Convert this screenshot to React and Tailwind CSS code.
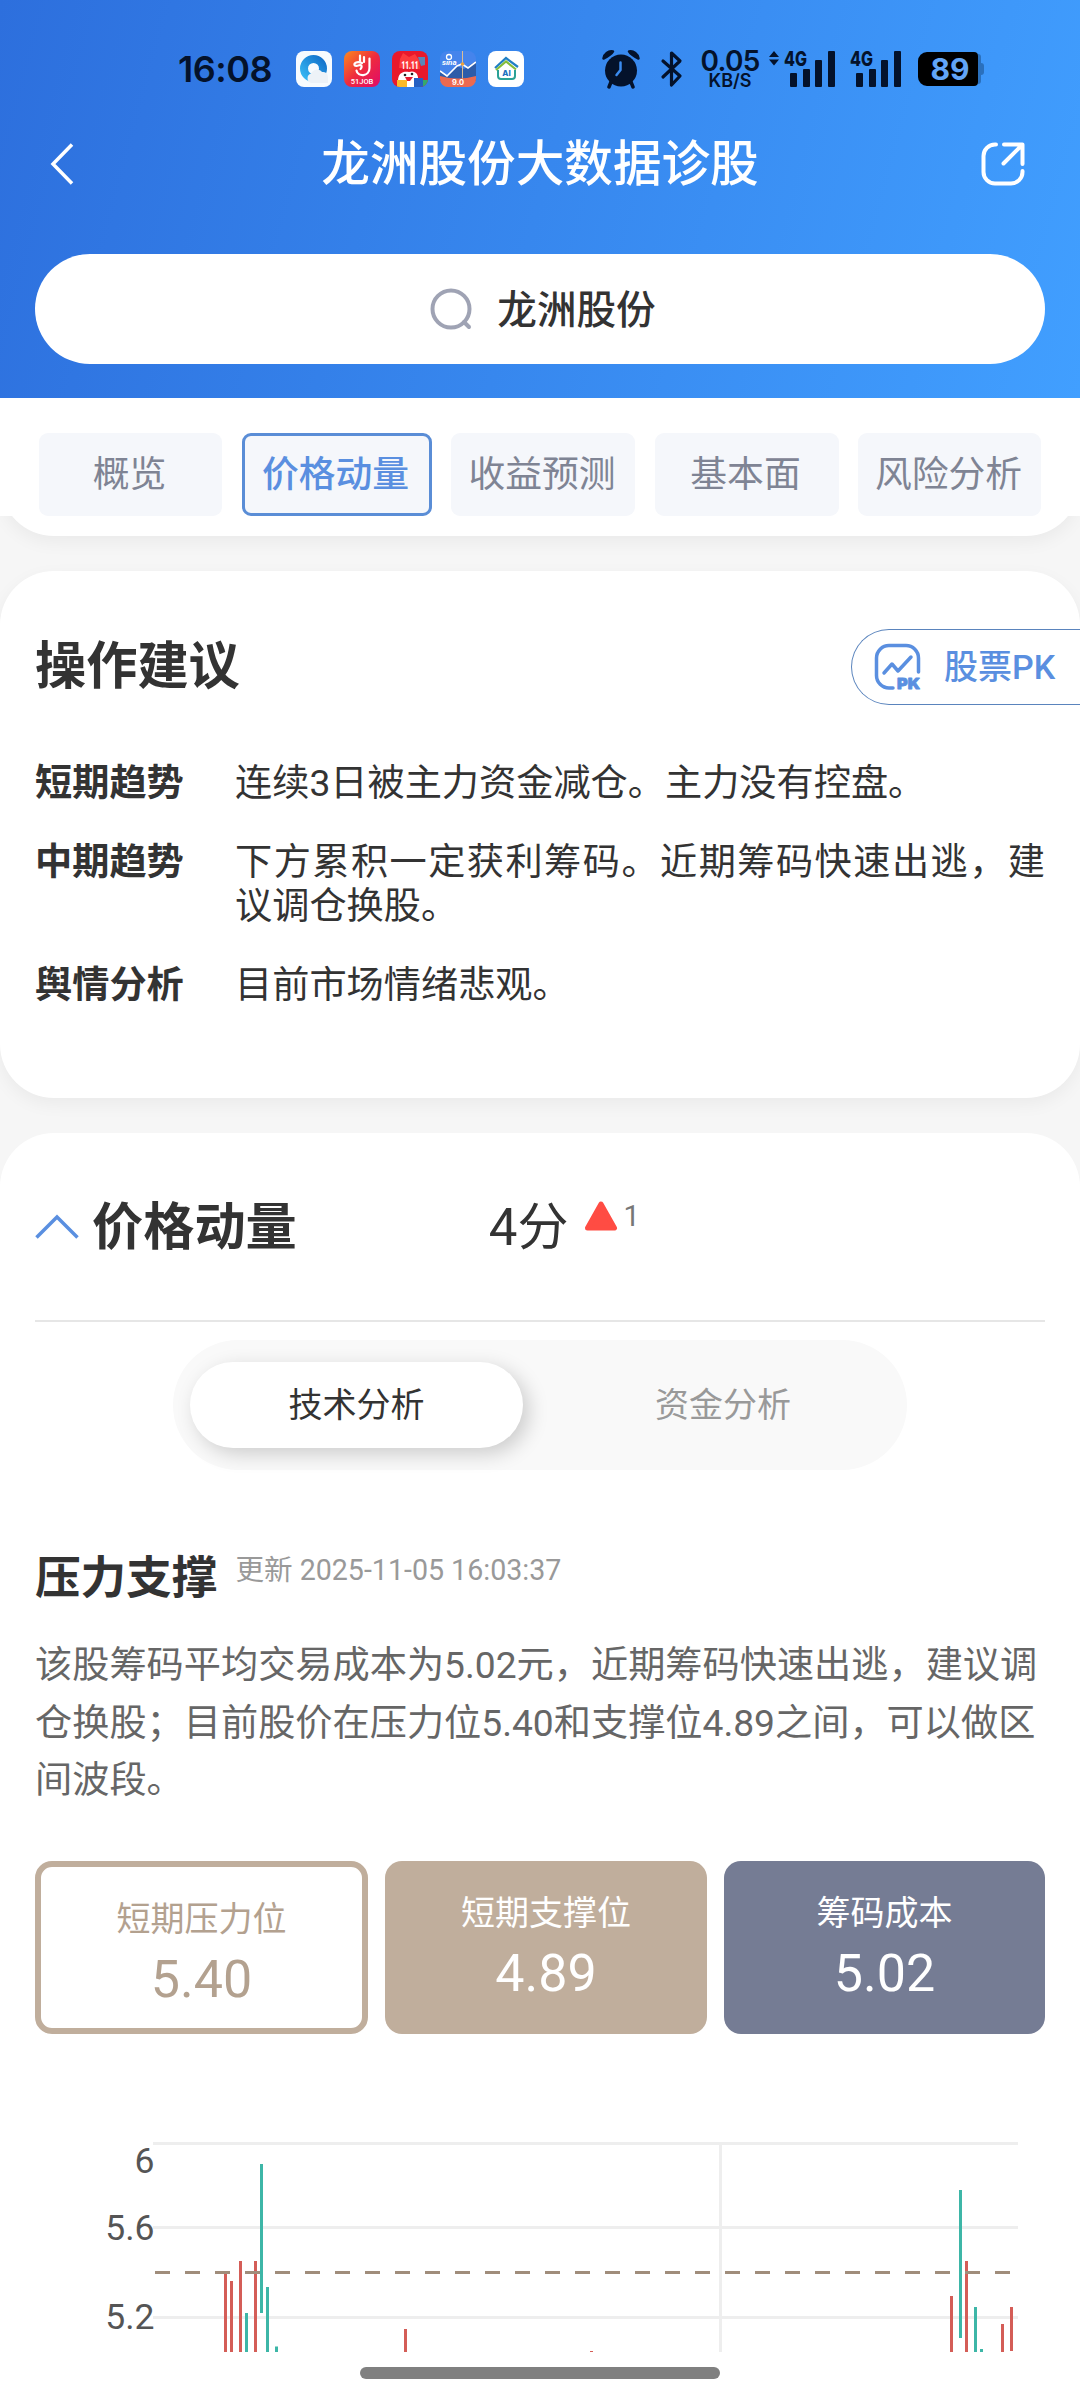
// src/App.jsx
import React, { useState } from "react";

const tabs = [
  { name: "概览", width: "w-[183px]" },
  { name: "价格动量", width: "w-[190px]" },
  { name: "收益预测", width: "w-[184px]" },
  { name: "基本面", width: "w-[184px]" },
  { name: "风险分析", width: "w-[183px]" },
];

const advice = [
  { label: "短期趋势", text: "连续3日被主力资金减仓。主力没有控盘。" },
  { label: "中期趋势", text: "下方累积一定获利筹码。近期筹码快速出逃，建议调仓换股。" },
  { label: "舆情分析", text: "目前市场情绪悲观。" },
];

// x, top, bottom, direction (all in chart units)
const bars = [
  [224, 239, 318, "up"],
  [230, 247, 318, "up"],
  [239, 227, 318, "up"],
  [245, 279, 318, "down"],
  [254, 227, 318, "up"],
  [260, 130, 279, "down"],
  [266, 253, 318, "down"],
  [275, 312.5, 318, "down"],
  [404, 295, 318, "up"],
  [590, 317, 318, "up"],
  [950, 262, 318, "up"],
  [959, 156, 304, "down"],
  [965, 227, 318, "up"],
  [974, 273, 318, "down"],
  [980, 315, 318, "down"],
  [1001, 290, 318, "up"],
  [1010, 273, 317, "up"],
];

function BrowserIcon() {
  return (
    <svg width="36" height="36" viewBox="0 0 36 36">
      <defs>
        <linearGradient id="ring" x1="0" y1="1" x2="1" y2="0">
          <stop offset="0" stopColor="#35b6f2" />
          <stop offset="1" stopColor="#1272cc" />
        </linearGradient>
      </defs>
      <rect width="36" height="36" rx="8" fill="#f7fbfe" />
      <circle cx="17.500" cy="17.500" r="9.500" fill="none" stroke="url(#ring)" strokeWidth="8" />
      <path d="M15 32a5 5 0 0 1 0-9.500 6.500 6.500 0 0 1 11-1.500 5 5 0 0 1 6 5v6z" fill="#edf2f7" />
    </svg>
  );
}

function JobIcon() {
  return (
    <svg width="36" height="36" viewBox="0 0 36 36">
      <defs>
        <linearGradient id="job" x1="0" y1="0" x2="1" y2="1">
          <stop offset="0" stopColor="#fb8a1e" />
          <stop offset="0.5" stopColor="#ee2b3e" />
          <stop offset="1" stopColor="#e00a6a" />
        </linearGradient>
      </defs>
      <rect width="36" height="36" rx="8" fill="url(#job)" />
      <g fill="none" stroke="#fff" strokeWidth="2.200" strokeLinecap="round" strokeLinejoin="round">
        <path d="M16 10V4.500M20 11V6M25.500 7.500V17c0 9-12 9-13 2.500" />
        <path d="M18 12c-5-2-8 0-7.500 2s5 0 6 0 2 2 0 4" />
      </g>
      <text x="18" y="33" fontSize="7.500" fill="#fff" textAnchor="middle" fontFamily="Roboto" fontWeight="500">51JOB</text>
    </svg>
  );
}

function SaleIcon() {
  return (
    <svg width="36" height="36" viewBox="0 0 36 36">
      <defs>
        <clipPath id="sale"><rect width="36" height="36" rx="8" /></clipPath>
      </defs>
      <g clipPath="url(#sale)">
        <rect width="36" height="36" fill="#e8192c" />
        <path d="M7 17 8 8l3-6 6 4 6-3 4 6 1 9z" fill="#fb3a3c" />
        <path d="M26 6h7v8l-4 1z" fill="#5a87b8" />
        <text x="18" y="18" fontSize="11" textLength="17" lengthAdjust="spacingAndGlyphs" fill="#fff" textAnchor="middle" fontFamily="Roboto" fontWeight="900">11.11</text>
        <path d="M6 30c0-8 5-10 11-9 6-2 10 2 9 9l-2 6H8z" fill="#fff" />
        <circle cx="13" cy="24" r="1.300" fill="#222" />
        <circle cx="20" cy="23" r="1.300" fill="#222" />
        <path d="M13 26h8l-3 4h-3z" fill="#e21b2f" />
        <rect x="5" y="29" width="10" height="7" fill="#fbb928" />
        <rect x="22" y="27" width="9" height="9" fill="#2460c2" />
        <rect x="31" y="29" width="5" height="7" fill="#35a96a" />
      </g>
    </svg>
  );
}

function SinaIcon() {
  return (
    <svg width="36" height="36" viewBox="0 0 36 36">
      <defs>
        <clipPath id="sina"><rect width="36" height="36" rx="8" /></clipPath>
      </defs>
      <g clipPath="url(#sina)">
        <rect width="36" height="36" fill="#4584ec" />
        <path d="M0 20l7 6 10-11 7 3 12-8v20H0z" fill="#2d5ca9" />
        <path d="M22.500 0v28" stroke="#d9bd96" strokeWidth="1" />
        <path d="M0 20l7 5 10-10 5-2 6 4 8-6" fill="none" stroke="#fff" strokeWidth="1.600" />
        <circle cx="22.500" cy="13" r="1.800" fill="#eaa13c" />
        <path d="M0 25q18 5 36 0v11H0z" fill="#ec6a50" />
        <circle cx="9" cy="6" r="2.500" fill="none" stroke="#fff" strokeWidth="1.300" />
        <text x="2" y="14" fontSize="8" fill="#fff" fontStyle="italic" fontFamily="Roboto" fontWeight="700">sina</text>
        <text x="18" y="34" fontSize="7.500" fill="#fff" textAnchor="middle" fontFamily="Inter" fontWeight="700">9.0</text>
      </g>
    </svg>
  );
}

function HomeAiIcon() {
  return (
    <svg width="36" height="36" viewBox="0 0 36 36">
      <rect width="36" height="36" rx="8" fill="#fff" />
      <path d="M7 17 18 7l12 9" fill="none" stroke="#1f7fc4" strokeWidth="2.200" />
      <path d="M8 19 18 10.500l10 8" fill="none" stroke="#84bd3b" strokeWidth="2.200" />
      <path d="M10 19v6q0 3 3 3h11q3 0 3-3v-6" fill="none" stroke="#2aa196" strokeWidth="2" />
      <text x="18.500" y="25" fontSize="8" fill="#1b70c0" textAnchor="middle" fontFamily="Inter" fontWeight="800">AI</text>
    </svg>
  );
}

function AlarmIcon() {
  return (
    <svg width="38" height="40" viewBox="0 0 38 40" className="ml-[78px]">
      <g fill="#04122b">
        <circle cx="19" cy="21.500" r="16" />
        <path d="M1.500 9.500A8 8 0 0 1 11 2.500Q9 6 1.500 9.500zM36.500 9.500A8 8 0 0 0 27 2.500q2 3.500 9.500 7z" stroke="#04122b" strokeWidth="2.500" strokeLinejoin="round" />
        <path d="M9 33l-2 5M29 33l2 5" stroke="#04122b" strokeWidth="3.500" strokeLinecap="round" />
      </g>
      <path d="M18.500 13.500v7.500l-4 5" fill="none" stroke="#3a8bf0" strokeWidth="2.500" strokeLinecap="round" strokeLinejoin="round" />
    </svg>
  );
}

function SignalIcon({ arrows, className }) {
  return (
    <svg width="68" height="54" viewBox="0 -8 68 54" className={className}>
      <g fill="#04122b">
        {arrows && <path d="M1 7 6 1l5 6zM1 9.500h10L6 15.500z" />}
        <text x="16" y="16" fontSize="20" textLength="23" lengthAdjust="spacingAndGlyphs" fontFamily="Inter" fontWeight="800">4G</text>
        <rect x="22" y="23" width="7" height="14" rx="1" />
        <rect x="35" y="19" width="7" height="18" rx="1" />
        <rect x="47" y="10" width="7" height="27" rx="1" />
        <rect x="60" y="1" width="7" height="36" rx="1" />
      </g>
    </svg>
  );
}

function StatusBar() {
  return (
    <div className="flex h-[110px] items-center pt-[28px] pl-[178px] text-[#04122b]">
      <span className="w-[118px] font-[Inter] text-[36px] leading-none font-semibold tracking-[-0.5px]">16:08</span>
      <div className="flex gap-[12px]">
        <BrowserIcon />
        <JobIcon />
        <SaleIcon />
        <SinaIcon />
        <HomeAiIcon />
      </div>
      <AlarmIcon />
      <svg width="24" height="38" viewBox="0 0 24 38" className="ml-[20px]">
        <path d="M3 11l17 15-8.500 9V3L20 11 3 27" fill="none" stroke="#04122b" strokeWidth="3.200" strokeLinecap="round" strokeLinejoin="round" />
      </svg>
      <div className="ml-[14px] w-[64px] text-center font-[Inter] font-semibold">
        <div className="text-[28px] leading-[23px] tracking-tight">0.05</div>
        <div className="text-[18px] leading-[15px]">KB/S</div>
      </div>
      <SignalIcon arrows className="ml-[6px]" />
      <SignalIcon className="-ml-[2px]" />
      <div className="ml-[16px] flex items-center">
        <div className="flex h-[34px] w-[60px] items-center justify-center rounded-[9px] rounded-r-[4px] bg-black pl-[4px] font-[Inter] text-[30px] leading-none font-bold text-[#62a5f8]">89</div>
        <div className="h-[30px] w-[3px] rounded-r-[3px] bg-[#2a70bd]" />
        <div className="h-[12px] w-[3px] rounded-r-[3px] bg-[#2a70bd]" />
      </div>
    </div>
  );
}

function Header() {
  return (
    <header className="h-[398px] bg-linear-[105deg,#2d6fdd,#419fff]">
      <StatusBar />
      <div className="flex h-[107px] items-center justify-between pr-[55px] pl-[50px]">
        <svg width="24" height="42" viewBox="0 0 24 42" fill="none" stroke="#fff" strokeWidth="3.500">
          <path d="M22 1.500 3 21l19 19.500" />
        </svg>
        <h1 className="pt-[3px] pl-[25px] text-[48.600px] font-medium text-white">龙洲股份大数据诊股</h1>
        <svg width="44" height="44" viewBox="0 0 44 44" fill="none" stroke="#fff" strokeWidth="4" strokeLinecap="round" strokeLinejoin="round">
          <path d="M15 2.500h-1A11.500 11.500 0 0 0 2.500 14v16A11.500 11.500 0 0 0 14 41.500h16A11.500 11.500 0 0 0 41.500 30v-1" />
          <path d="M23 2.500h18.500V22M40 4 22.500 21.500" />
        </svg>
      </div>
      <div className="mx-[35px] mt-[37px] flex h-[110px] items-center justify-center rounded-full bg-white pl-[5px]">
        <svg width="44" height="44" viewBox="0 0 44 44" fill="none" stroke="#9fa3b4" strokeWidth="4" strokeLinecap="round">
          <circle cx="22" cy="22" r="18.500" />
          <path d="M35 35l5 5" />
        </svg>
        <span className="ml-[24px] pt-[3px] text-[39.600px] font-medium text-[#333]">龙洲股份</span>
      </div>
    </header>
  );
}

function PkIcon() {
  return (
    <svg width="48" height="52" viewBox="0 -2 48 52" fill="none" stroke="#5a8fe0" strokeWidth="3.500" strokeLinecap="round" strokeLinejoin="round">
      <path d="M19 45h-4A12.500 12.500 0 0 1 2.500 32.500V15A12.500 12.500 0 0 1 15 2.500h17A12.500 12.500 0 0 1 44.500 15v14" />
      <path d="M10 30l8-9 6 7 13-14" />
      <text x="23" y="46" fontSize="15" fill="#5a8fe0" strokeWidth="0.800" textLength="23" lengthAdjust="spacingAndGlyphs" fontFamily="Inter" fontWeight="900">PK</text>
    </svg>
  );
}

function Chart() {
  return (
    <svg width="1080" height="318" viewBox="0 0 1080 318" className="block">
      <g fill="#eee">
        <rect x="153" y="108" width="865" height="3" />
        <rect x="153" y="192" width="865" height="3" />
        <rect x="153" y="282" width="865" height="3" />
        <rect x="719" y="108" width="3" height="210" />
      </g>
      <g fill="#555" fontSize="35.500" textAnchor="end" fontFamily="Roboto">
        <text x="154.500" y="139">6</text>
        <text x="154.500" y="206">5.6</text>
        <text x="154.500" y="294.500">5.2</text>
      </g>
      {bars.map(([x, top, bottom, dir]) => (
        <rect key={x} x={x} y={top} width="3" height={bottom - top} fill={dir === "up" ? "#d45d57" : "#3db6a7"} />
      ))}
      <path d="M155 238.500H1011" stroke="#a08d7b" strokeWidth="3" strokeDasharray="15 15" />
    </svg>
  );
}

export default function App() {
  const [active, setActive] = useState("价格动量");
  const [mode, setMode] = useState("技术分析");

  return (
    <div lang="zh-CN" className="flex h-[2400px] w-[1080px] flex-col overflow-hidden bg-[#f6f6f6] font-[Roboto,'Noto_Sans_CJK_SC',sans-serif] text-[#333]">
      <Header />

      <nav className="flex h-[118px] shrink-0 justify-between bg-white px-[39px] pt-[35px]">
        {tabs.map((tab) => (
          <button
            key={tab.name}
            onClick={() => setActive(tab.name)}
            className={`${tab.width} h-[83px] rounded-[9px] bg-[#f5f7fb] pr-[2px] text-[36.800px] whitespace-nowrap ${
              active === tab.name ? "border-[3px] border-[#5a8dd6] font-medium text-[#5a8fe0]" : "text-[#7f8494]"
            }`}
          >
            {tab.name}
          </button>
        ))}
      </nav>

      {/* bottom edge of the card that scrolls under the tabs */}
      <div className="h-[55px] shrink-0 overflow-hidden">
        <div className="-mt-[100px] h-[120px] rounded-b-[54px] bg-white shadow-[0_6px_18px_rgba(0,0,0,0.05)]" />
      </div>

      <section className="h-[527px] shrink-0 rounded-[54px] bg-white pt-[58px] shadow-[0_6px_18px_rgba(0,0,0,0.05)]">
        <div className="flex h-[76px] items-center justify-between pl-[35px]">
          <h2 className="text-[51.200px] leading-none font-bold">操作建议</h2>
          <button className="flex h-[76px] w-[229px] items-center rounded-l-full border border-r-0 border-[#5a84bd] pl-[22px] font-medium text-[#5a8fe0]">
            <PkIcon />
            <span className="ml-[22px] pt-[1px] text-[34px] whitespace-nowrap">股票PK</span>
          </button>
        </div>
        <div className="mt-[56px] flex flex-col gap-[35px] pr-[35px] pl-[35px] text-[37.200px] leading-[44px]">
          {advice.map((row) => (
            <div key={row.label} className="flex">
              <div className="w-[200px] shrink-0 font-bold">{row.label}</div>
              <p className="flex-1 text-justify">{row.text}</p>
            </div>
          ))}
        </div>
      </section>

      <section className="mt-[35px] flex h-[1219px] shrink-0 flex-col overflow-hidden rounded-t-[54px] bg-white">
        <div className="mx-[35px] flex h-[189px] shrink-0 items-center border-b-2 border-[#e6e6e6]">
          <svg width="44" height="26" viewBox="0 0 44 26" fill="none" stroke="#5a8fe0" strokeWidth="3.500">
            <path d="M1.500 23.500 22 3l20.500 20.500" />
          </svg>
          <h2 className="ml-[13px] pt-[4px] text-[51.200px] font-bold">价格动量</h2>
          <span className="ml-[192px] pt-[4px] text-[51px]">4分</span>
          <div className="mb-[21px] ml-[16px] flex items-center">
            <svg width="34" height="32" viewBox="0 0 34 32">
              <path d="M17 4 30.500 28h-27z" fill="#ff4c43" stroke="#ff4c43" strokeWidth="5" strokeLinejoin="round" />
            </svg>
            <span className="ml-[5px] text-[29px] leading-none text-[#777]">1</span>
          </div>
        </div>

        <div className="mx-auto mt-[18px] flex h-[130px] w-[734px] shrink-0 items-center rounded-full bg-[#f9f9f9] pl-[17px] text-[34px]">
          {["技术分析", "资金分析"].map((name) => (
            <button
              key={name}
              onClick={() => setMode(name)}
              className={mode === name ? "h-[86px] w-[333px] rounded-full bg-white shadow-[6px_6px_20px_rgba(0,0,0,0.18)]" : "h-[86px] w-[384px] pl-[16px] text-[#999]"}
            >
              {name}
            </button>
          ))}
        </div>

        <div className="mt-[79px] flex h-[60px] shrink-0 items-center px-[35px]">
          <h3 className="text-[45.600px] leading-none font-bold">压力支撑</h3>
          <span className="mb-[18px] ml-[18px] text-[28.600px] leading-none text-[#999]">更新 2025-11-05 16:03:37</span>
        </div>
        <p className="mt-[28px] px-[35px] text-[37.200px] leading-[57.500px] text-[#666]">
          该股筹码平均交易成本为5.02元，近期筹码快速出逃，建议调仓换股；目前股价在压力位5.40和支撑位4.89之间，可以做区间波段。
        </p>

        <div className="mt-[51px] flex h-[173px] shrink-0 gap-[17px] px-[35px] text-center text-white">
          <div className="w-[333px] rounded-[17px] border-[6px] border-[#c0ae9c] pt-[29px] text-[#b3a18f]">
            <div className="text-[34px] leading-[46px]">短期压力位</div>
            <div className="mt-[8px] text-[52px] leading-[60px]">5.40</div>
          </div>
          <div className="w-[322px] rounded-[17px] bg-[#c0ae9c] pt-[29px]">
            <div className="text-[34px] leading-[46px]">短期支撑位</div>
            <div className="mt-[8px] text-[52px] leading-[60px]">4.89</div>
          </div>
          <div className="w-[321px] rounded-[17px] bg-[#757c94] pt-[29px]">
            <div className="text-[34px] leading-[46px]">筹码成本</div>
            <div className="mt-[8px] text-[52px] leading-[60px]">5.02</div>
          </div>
        </div>

        <Chart />
      </section>

      <div className="flex h-[48px] shrink-0 justify-center bg-white pt-[15px]">
        <div className="h-[12px] w-[360px] rounded-full bg-[#808080]" />
      </div>
    </div>
  );
}
